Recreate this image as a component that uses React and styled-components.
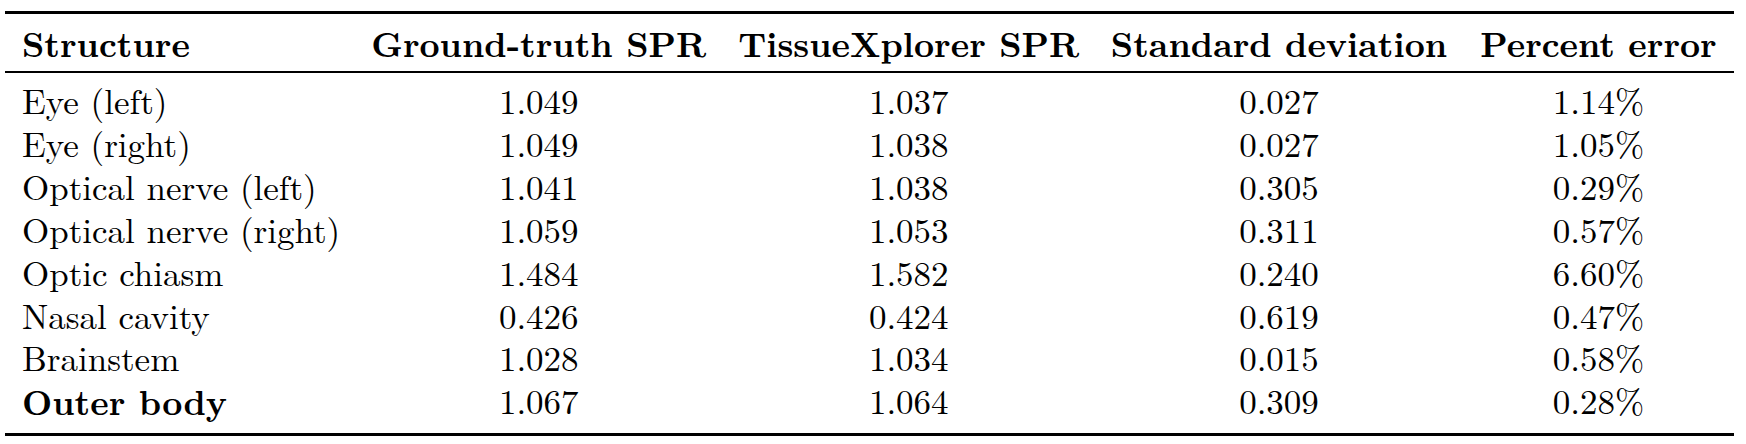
import React from "react";
import styled, { createGlobalStyle } from "styled-components";

const serif = `"Latin Modern Roman", "Liberation Serif", "Times New Roman", serif`;

const GlobalStyle = createGlobalStyle`
  html, body {
    margin: 0;
    padding: 0;
    background: #ffffff;
  }
  body {
    font-family: ${serif};
    color: #000000;
  }
`;

const Page = styled.div`
  padding: 11px 0 0 5px;
`;

// booktabs-like table: heavy top/bottom rules, light rule under the head
const Table = styled.table`
  width: 1729px;
  table-layout: fixed;
  border-collapse: separate;
  border-spacing: 0;
  border-top: 3px solid #000;
  border-bottom: 3px solid #000;
  font-family: ${serif};
  font-size: 35px;
  color: #000;
`;

const Col = styled.col`
  width: ${(p) => p.$w}px;
`;

const HeadCell = styled.th`
  padding: 6.7px 0 7.7px ${(p) => (p.$first ? "17px" : "0")};
  font-family: ${serif};
  font-size: 35px;
  line-height: 42.6px;
  font-weight: 700;
  text-align: ${(p) => (p.$first ? "left" : "center")};
  white-space: nowrap;
  border-bottom: 2px solid #000;
`;

const Body = styled.tbody`
  tr:first-child td {
    padding-top: 6px;
  }
  tr:last-child td {
    padding-bottom: 10.8px;
  }
`;

const Cell = styled.td`
  padding: 0 0 0 ${(p) => (p.$first ? "17px" : "0")};
  font-family: ${serif};
  font-size: 35px;
  line-height: 42.9px;
  white-space: nowrap;
  text-align: ${(p) => (p.$first ? "left" : "center")};
  font-weight: ${(p) => (p.$bold ? 700 : 400)};
`;

const columns = [
  { label: "Structure", width: 350 },
  { label: "Ground-truth SPR", width: 367.5 },
  { label: "TissueXplorer SPR", width: 372.5 },
  { label: "Standard deviation", width: 368 },
  { label: "Percent error", width: 271 },
];

const rows = [
  ["Eye (left)", "1.049", "1.037", "0.027", "1.14%"],
  ["Eye (right)", "1.049", "1.038", "0.027", "1.05%"],
  ["Optical nerve (left)", "1.041", "1.038", "0.305", "0.29%"],
  ["Optical nerve (right)", "1.059", "1.053", "0.311", "0.57%"],
  ["Optic chiasm", "1.484", "1.582", "0.240", "6.60%"],
  ["Nasal cavity", "0.426", "0.424", "0.619", "0.47%"],
  ["Brainstem", "1.028", "1.034", "0.015", "0.58%"],
  ["Outer body", "1.067", "1.064", "0.309", "0.28%", true],
];

export default function App() {
  return (
    <>
      <GlobalStyle />
      <Page>
        <Table>
          <colgroup>
            {columns.map((c) => (
              <Col key={c.label} $w={c.width} />
            ))}
          </colgroup>
          <thead>
            <tr>
              {columns.map((c, i) => (
                <HeadCell key={c.label} $first={i === 0}>
                  {c.label}
                </HeadCell>
              ))}
            </tr>
          </thead>
          <Body>
            {rows.map((r) => (
              <tr key={r[0]}>
                {r.slice(0, 5).map((v, i) => (
                  <Cell key={i} $first={i === 0} $bold={i === 0 && r[5]}>
                    {v}
                  </Cell>
                ))}
              </tr>
            ))}
          </Body>
        </Table>
      </Page>
    </>
  );
}
